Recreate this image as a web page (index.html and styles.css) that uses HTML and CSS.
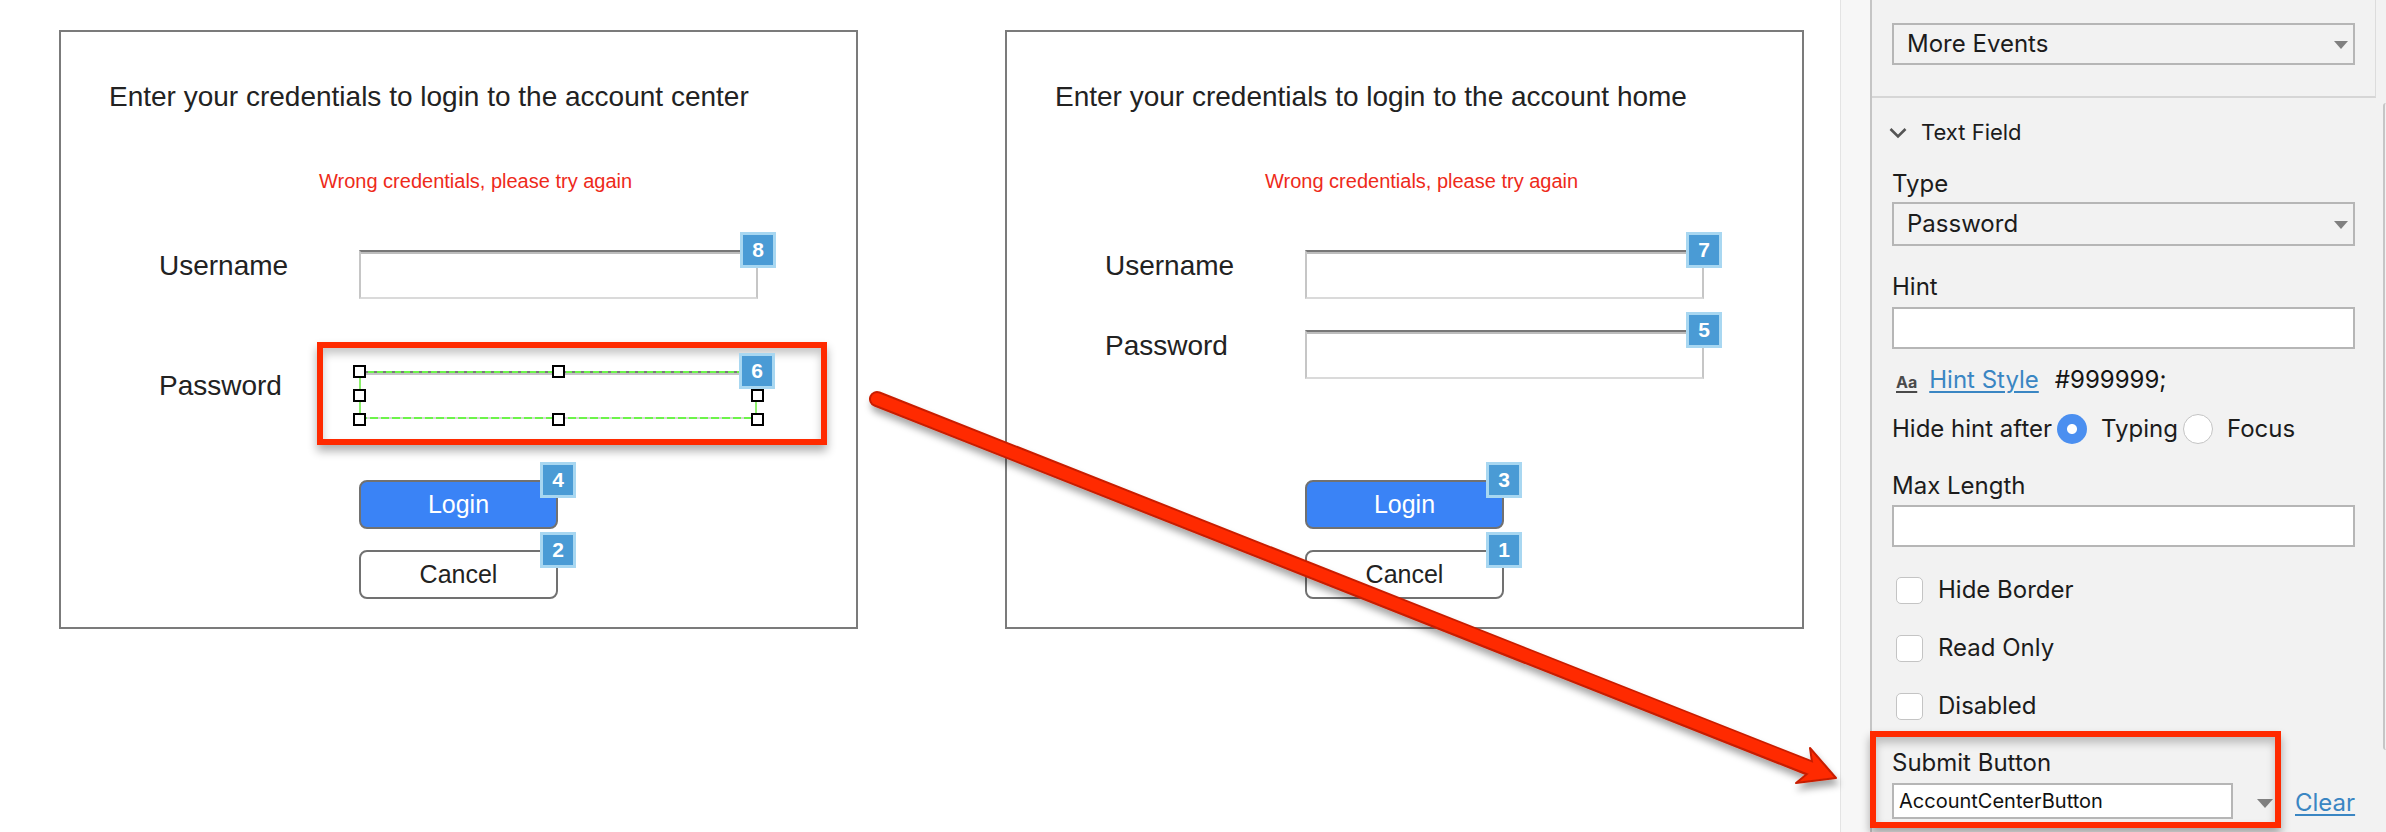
FILE: index.html
```html
<!DOCTYPE html>
<html lang="en">
<head>
<meta charset="utf-8">
<title>Text Field – Submit Button</title>
<link rel="stylesheet" href="styles.css">
</head>
<body>
<div class="app">
  <main class="canvas">
    <section class="card">
      <h1 class="card-title">Enter your credentials to login to the account center</h1>
      <p class="error">Wrong credentials, please try again</p>
      <div class="row row--user">
        <span class="label">Username</span>
        <div class="field-wrap"><div class="field"></div><span class="badge">8</span></div>
      </div>
      <div class="row row--pass-sel">
        <span class="label">Password</span>
        <div class="field-wrap field-wrap--sel">
          <div class="field-sel">
            <span class="handle h-tl"></span><span class="handle h-tm"></span>
            <span class="handle h-ml"></span><span class="handle h-mr"></span>
            <span class="handle h-bl"></span><span class="handle h-bm"></span><span class="handle h-br"></span>
          </div>
          <span class="badge">6</span>
        </div>
      </div>
      <div class="buttons buttons--left">
        <div class="btn-wrap"><div class="btn btn--primary">Login</div><span class="badge">4</span></div>
        <div class="btn-wrap"><div class="btn">Cancel</div><span class="badge">2</span></div>
      </div>
      <div class="highlight highlight--field"></div>
    </section>

    <section class="card">
      <h1 class="card-title">Enter your credentials to login to the account home</h1>
      <p class="error">Wrong credentials, please try again</p>
      <div class="row row--user">
        <span class="label">Username</span>
        <div class="field-wrap"><div class="field"></div><span class="badge">7</span></div>
      </div>
      <div class="row row--pass">
        <span class="label">Password</span>
        <div class="field-wrap"><div class="field"></div><span class="badge">5</span></div>
      </div>
      <div class="buttons buttons--right">
        <div class="btn-wrap"><div class="btn btn--primary">Login</div><span class="badge">3</span></div>
        <div class="btn-wrap"><div class="btn">Cancel</div><span class="badge">1</span></div>
      </div>
    </section>
  </main>

  <aside class="panel">
    <div class="panel-gutter"></div>
    <div class="panel-body">
      <div class="section-events">
        <div class="select"><span>More Events</span><i class="caret"></i></div>
      </div>
      <div class="section-text">
        <div class="section-head">
          <svg class="chevron" width="18" height="12" viewBox="0 0 18 12"><polyline points="1.5,2 9,9.5 16.5,2" fill="none" stroke="#555" stroke-width="2.6"/></svg>
          <span>Text Field</span>
        </div>
        <div class="prop-label lbl-type">Type</div>
        <div class="select select--type"><span>Password</span><i class="caret"></i></div>
        <div class="prop-label lbl-hint">Hint</div>
        <div class="input input--hint"></div>
        <div class="hint-style">
          <span class="aa">Aa</span>
          <a class="link link--hint">Hint Style</a>
          <span class="hex">#999999;</span>
        </div>
        <div class="radio-row">
          <span>Hide hint after</span>
          <span class="radio radio--on"></span>
          <span class="radio-text">Typing</span>
          <span class="radio"></span>
          <span class="radio-text">Focus</span>
        </div>
        <div class="prop-label lbl-max">Max Length</div>
        <div class="input input--max"></div>
        <div class="check-row check-row--first"><span class="check"></span><span>Hide Border</span></div>
        <div class="check-row"><span class="check"></span><span>Read Only</span></div>
        <div class="check-row"><span class="check"></span><span>Disabled</span></div>
        <div class="prop-label lbl-submit">Submit Button</div>
        <div class="submit-row">
          <div class="input input--submit">AccountCenterButton</div>
          <i class="caret caret--submit"></i>
          <a class="link link--clear">Clear</a>
        </div>
      </div>
      <div class="scroll-thumb"></div>
      <div class="highlight highlight--submit"></div>
    </div>
  </aside>
</div>

<svg class="arrow-overlay" width="2386" height="832" viewBox="0 0 2386 832">
  <defs>
    <filter id="arrowShadow" x="-5%" y="-10%" width="110%" height="130%">
      <feDropShadow dx="2" dy="6" stdDeviation="3.5" flood-color="#000" flood-opacity="0.35"/>
    </filter>
  </defs>
  <g filter="url(#arrowShadow)">
    <line x1="877" y1="399" x2="1812" y2="769" stroke="#c81f00" stroke-width="16" stroke-linecap="round"/>
    <polygon points="1836,778 1810,748 1813,769 1796,783" fill="#ff2a00" stroke="#c81f00" stroke-width="2" stroke-linejoin="round"/>
    <line x1="877" y1="399" x2="1814" y2="769.5" stroke="#ff2a00" stroke-width="12" stroke-linecap="round"/>
  </g>
</svg>
</body>
</html>
```

FILE: styles.css
```css
html, body {
  margin: 0;
  padding: 0;
}

body {
  width: 2386px;
  height: 832px;
  overflow: hidden;
  background: #ffffff;
  position: relative;
  font-family: "Liberation Sans", Arial, sans-serif;
  color: #222222;
}

.app {
  display: flex;
  width: 2386px;
  height: 832px;
}

/* ---------- Canvas with the two mock-up screens ---------- */
.canvas {
  flex: none;
  width: 1840px;
  box-sizing: border-box;
  padding: 30px 0 0 59px;
  display: flex;
  align-items: flex-start;
  gap: 147px;
}

.card {
  position: relative;
  width: 799px;
  height: 599px;
  box-sizing: border-box;
  border: 2px solid #7b7b7b;
  padding: 49px 0 0 48px;
  display: flex;
  flex-direction: column;
  align-items: flex-start;
}

.card-title {
  margin: 0;
  font-weight: 400;
  font-size: 28px;
  line-height: 32px;
  color: #222222;
  white-space: nowrap;
}

.error {
  margin: 56px 0 0 210px;
  font-size: 20px;
  line-height: 24px;
  color: #ee2a1a;
  white-space: nowrap;
}

.row {
  display: flex;
  align-items: flex-start;
  margin-left: 50px;
}

.row--user { margin-top: 57px; }
.row--pass { margin-top: 31px; }
.row--pass-sel { margin-top: 71px; }

.label {
  width: 200px;
  font-size: 28px;
  line-height: 32px;
  color: #222222;
}

.field-wrap {
  position: relative;
}

.field {
  width: 399px;
  height: 49px;
  box-sizing: border-box;
  background: #ffffff;
  border: 2px solid #c6c6c6;
  border-top-color: #777777;
  border-bottom-color: #dadada;
  box-shadow: inset 0 2px 0 #bdbdbd;
}

.field-wrap--sel {
  margin-top: 1px;
}

.field-sel {
  position: relative;
  width: 398px;
  height: 48px;
  background:
    repeating-linear-gradient(90deg, #6cf44a 0 6px, #7a7a7a 6px 9px) top left / 100% 2px no-repeat,
    linear-gradient(#c4c4c4, #c4c4c4) 0 2px / 100% 2px no-repeat,
    repeating-linear-gradient(90deg, #6cf44a 0 8px, #d6d6d6 8px 11px) bottom left / 100% 2px no-repeat,
    linear-gradient(#8cf06c, #8cf06c) left top / 2px 100% no-repeat,
    linear-gradient(#8cf06c, #8cf06c) right top / 2px 100% no-repeat,
    #ffffff;
}

.handle {
  position: absolute;
  width: 13px;
  height: 13px;
  box-sizing: border-box;
  border: 2px solid #000000;
  background: #ffffff;
  margin: -6px 0 0 -6px;
}

.h-tl { left: 0; top: 0; }
.h-tm { left: 50%; top: 0; }
.h-ml { left: 0; top: 50%; }
.h-mr { left: 100%; top: 50%; }
.h-bl { left: 0; top: 100%; }
.h-bm { left: 50%; top: 100%; }
.h-br { left: 100%; top: 100%; }

.buttons {
  display: flex;
  flex-direction: column;
  gap: 21px;
  margin-left: 250px;
}

.buttons--left { margin-top: 61px; }
.buttons--right { margin-top: 101px; }

.btn-wrap {
  position: relative;
}

.btn {
  width: 199px;
  height: 49px;
  box-sizing: border-box;
  border: 2px solid #717171;
  border-radius: 8px;
  background: #ffffff;
  display: flex;
  align-items: center;
  justify-content: center;
  font-size: 25px;
  color: #222222;
}

.btn--primary {
  background: #3a83f6;
  color: #ffffff;
}

.badge {
  position: absolute;
  z-index: 2;
  right: -18px;
  top: -18px;
  width: 36px;
  height: 36px;
  box-sizing: border-box;
  border: 3px solid #a8d7f1;
  background: #4a9bd5;
  color: #ffffff;
  font-weight: 700;
  font-size: 21px;
  display: flex;
  align-items: center;
  justify-content: center;
}

.highlight {
  position: absolute;
  box-sizing: border-box;
  border: 6px solid #ff2a00;
  box-shadow: 0 6px 9px rgba(0, 0, 0, 0.32), inset 0 6px 8px rgba(0, 0, 0, 0.22);
  pointer-events: none;
}

.highlight--field {
  left: 256px;
  top: 310px;
  width: 510px;
  height: 103px;
}

/* ---------- Properties panel ---------- */
.panel {
  flex: none;
  width: 546px;
  display: flex;
  font-family: "Inter", "Noto Sans", sans-serif;
  font-size: 24px;
  color: #1c1c1c;
}

.panel-gutter {
  width: 30px;
  box-sizing: border-box;
  background: #f7f7f7;
  border-left: 1px solid #e4e4e4;
}

.panel-body {
  position: relative;
  flex: 1;
  background: #f2f2f2;
  border-left: 2px solid #c5c5c5;
}

.section-events {
  width: 504px;
  height: 98px;
  box-sizing: border-box;
  padding: 23px 0 0 20px;
  border-bottom: 2px solid #d6d6d6;
  border-right: 1px solid #dcdcdc;
}

.select {
  width: 463px;
  height: 42px;
  box-sizing: border-box;
  border: 2px solid #b6b6b6;
  display: flex;
  align-items: center;
  justify-content: space-between;
  padding: 0 5px 0 13px;
  line-height: 30px;
}

.caret {
  width: 0;
  height: 0;
  border-left: 7px solid transparent;
  border-right: 7px solid transparent;
  border-top: 8px solid #808080;
  margin-top: 2px;
}

.section-text {
  padding-left: 20px;
  display: flex;
  flex-direction: column;
  align-items: flex-start;
}

.section-head {
  margin-top: 20px;
  margin-left: -3px;
  display: flex;
  align-items: center;
  gap: 14px;
  font-size: 22px;
  line-height: 28px;
}

.chevron {
  display: block;
  margin-top: 2px;
}

.prop-label {
  line-height: 30px;
}

.lbl-type { margin-top: 23px; }
.lbl-hint { margin-top: 26px; }
.lbl-max { margin-top: 27px; }
.lbl-submit { margin-top: 28px; }

.select--type {
  margin-top: 3px;
  height: 44px;
}

.input {
  width: 463px;
  height: 42px;
  box-sizing: border-box;
  border: 2px solid #b6b6b6;
  background: #ffffff;
}

.input--hint { margin-top: 5px; }
.input--max { margin-top: 4px; }

.hint-style {
  margin-top: 16px;
  display: flex;
  align-items: baseline;
  line-height: 30px;
}

.aa {
  margin-left: 4px;
  font-size: 16px;
  font-weight: 700;
  color: #4a4a4a;
  text-decoration: underline;
  text-decoration-thickness: 2px;
  text-underline-offset: 3px;
}

.link {
  color: #3a86c3;
  text-decoration: underline;
  text-underline-offset: 3px;
}

.link--hint { margin-left: 12px; }

.hex {
  margin-left: 16px;
  color: #141414;
}

.radio-row {
  margin-top: 17px;
  display: flex;
  align-items: center;
  line-height: 30px;
  height: 30px;
}

.radio {
  width: 30px;
  height: 30px;
  box-sizing: border-box;
  border-radius: 50%;
  background: #ffffff;
  border: 1px solid #c4c4c4;
  margin: 0 14px 0 5px;
  flex: none;
}

.radio--on {
  border: none;
  background: radial-gradient(circle, #ffffff 0 4.5px, #4b8ff0 5.5px);
}

.check-row {
  margin-top: 30px;
  display: flex;
  align-items: center;
  height: 28px;
  line-height: 28px;
}

.check-row--first { margin-top: 29px; }

.check {
  width: 27px;
  height: 27px;
  box-sizing: border-box;
  border: 1px solid #c4c4c4;
  border-radius: 5px;
  background: #ffffff;
  margin: 0 15px 0 4px;
  flex: none;
}

.submit-row {
  margin-top: 5px;
  display: flex;
  align-items: center;
}

.input--submit {
  width: 341px;
  height: 36px;
  font-size: 20px;
  line-height: 32px;
  padding-left: 5px;
  color: #111111;
}

.caret--submit {
  margin: 4px 0 0 24px;
  border-left-width: 8px;
  border-right-width: 8px;
  border-top-width: 9px;
}

.link--clear {
  margin-left: 22px;
  margin-top: 2px;
}

.scroll-thumb {
  position: absolute;
  right: 0;
  top: 103px;
  width: 3px;
  height: 647px;
  box-sizing: border-box;
  border-left: 2px solid #c6c6c6;
  border-radius: 3px 0 0 3px;
}

.highlight--submit {
  left: -2px;
  top: 731px;
  width: 411px;
  height: 97px;
}

/* ---------- Annotation arrow ---------- */
.arrow-overlay {
  position: absolute;
  left: 0;
  top: 0;
  pointer-events: none;
}
```
